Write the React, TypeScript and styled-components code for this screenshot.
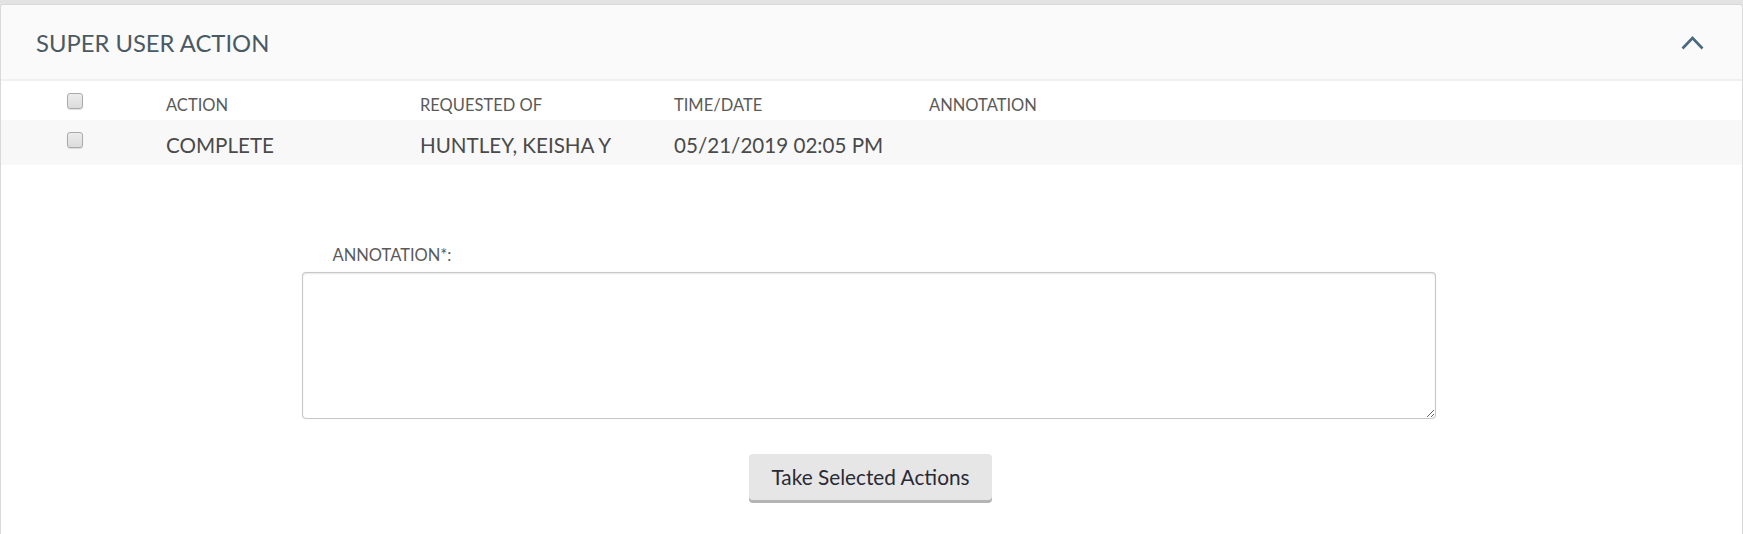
import * as React from 'react'
import styled, {createGlobalStyle} from 'styled-components'

const Global = createGlobalStyle({
	'html, body': {
		margin: 0,
		padding: 0,
		background: '#e3e3e3',
		fontFamily: 'Lato, "Open Sans", "Liberation Sans", sans-serif',
	},
	'#root': {
		minHeight: '534px',
	},
})

const Page = styled('div')({
	paddingTop: '4px',
	minHeight: '534px',
	boxSizing: 'border-box',
})

const Panel = styled('section')({
	background: 'white',
	border: '1px solid #d9d9d9',
	borderBottom: 'none',
	borderRadius: '4px 4px 0 0',
	minHeight: '530px',
	boxSizing: 'border-box',
	overflow: 'hidden',
})

const PanelHeader = styled('header')({
	display: 'flex',
	alignItems: 'center',
	justifyContent: 'space-between',
	height: '76px',
	padding: '1px 38px 0 35px',
	background: '#fafafa',
	borderBottom: '2px solid #f0f0f0',
	boxSizing: 'border-box',
})

const Title = styled('h2')({
	margin: 0,
	fontSize: '23.8px',
	fontWeight: 400,
	color: '#4b5963',
})

const ToggleButton = styled('button')({
	border: 'none',
	background: 'transparent',
	padding: 0,
	display: 'flex',
	cursor: 'pointer',
})

const Row = styled('div')<{$shaded?: boolean, $head?: boolean}>(({$shaded, $head}) => ({
	display: 'grid',
	gridTemplateColumns: '165px 254px 254px 255px 1fr',
	alignItems: 'center',
	height: $head ? '39px' : '45px',
	background: $shaded ? '#f8f8f8' : 'white',
	color: $head ? '#5a5a5a' : '#4a4a4a',
	fontSize: $head ? '16.5px' : '20.6px',
	paddingTop: $head ? '8px' : '4px',
	boxSizing: 'border-box',
}))

const CheckCell = styled('div')<{$offset: number}>(({$offset}) => ({
	paddingLeft: '66px',
	display: 'flex',
	alignSelf: 'start',
	paddingTop: `${$offset}px`,
}))

const Cell = styled('div')({
	whiteSpace: 'nowrap',
})

const Check = styled('input')({
	appearance: 'none',
	width: '16px',
	height: '16px',
	margin: 0,
	borderRadius: '3px',
	border: '1px solid #aaaaaa',
	background: 'linear-gradient(#ececec, #dcdcdc)',
	boxShadow: '0 1px 1px rgba(0,0,0,0.12)',
})

const Form = styled('div')({
	width: '1134px',
	marginLeft: 'calc(50% - 570px)',
	marginTop: '80px',
	display: 'flex',
	flexDirection: 'column',
})

const Label = styled('label')({
	fontSize: '16.5px',
	color: '#5a5a5a',
	paddingLeft: '31px',
	marginBottom: '7px',
	lineHeight: '20px',
})

const TextArea = styled('textarea')({
	height: '147px',
	border: '1px solid #c8c8c8',
	borderRadius: '4px',
	boxShadow: 'inset 0 1px 2px rgba(0,0,0,0.1), 0 0 1px rgba(0,0,0,0.15)',
	boxSizing: 'border-box',
	fontFamily: 'inherit',
	fontSize: '16px',
	padding: '8px 12px',
	outline: 'none',
})

const Actions = styled('div')({
	display: 'flex',
	justifyContent: 'center',
	marginTop: '35px',
	paddingLeft: '4px',
})

const PrimaryButton = styled('button')({
	width: '243px',
	height: '46px',
	border: 'none',
	borderRadius: '4px',
	background: '#e6e6e6',
	boxShadow: '0 3px 0 #b4b4b4',
	fontFamily: 'inherit',
	fontSize: '20.8px',
	color: '#2a2a35',
	cursor: 'pointer',
	padding: '0 0 2px',
})

const ChevronUp = () => (
	<svg width="23" height="15" viewBox="0 0 23 15">
		<path d="M1.5 13.5 L11.5 3 L21.5 13.5" fill="none" stroke="#4b6a80" strokeWidth="2.6" />
	</svg>
)

const rows = [
	{action: 'COMPLETE', requestedOf: 'HUNTLEY, KEISHA Y', time: '05/21/2019 02:05 PM', annotation: ''},
]

export default function App() {
	return (
		<>
			<Global />
			<Page>
				<Panel>
					<PanelHeader>
						<Title>SUPER USER ACTION</Title>
						<ToggleButton aria-label="Collapse">
							<ChevronUp />
						</ToggleButton>
					</PanelHeader>
					<Row $head>
						<CheckCell $offset={4}><Check type="checkbox" /></CheckCell>
						<Cell>ACTION</Cell>
						<Cell>REQUESTED OF</Cell>
						<Cell>TIME/DATE</Cell>
						<Cell>ANNOTATION</Cell>
					</Row>
					{rows.map((r, i) => (
						<Row key={i} $shaded>
							<CheckCell $offset={8}><Check type="checkbox" /></CheckCell>
							<Cell>{r.action}</Cell>
							<Cell>{r.requestedOf}</Cell>
							<Cell>{r.time}</Cell>
							<Cell>{r.annotation}</Cell>
						</Row>
					))}
					<Form>
						<Label htmlFor="annotation">ANNOTATION*:</Label>
						<TextArea id="annotation" />
						<Actions>
							<PrimaryButton>Take Selected Actions</PrimaryButton>
						</Actions>
					</Form>
				</Panel>
			</Page>
		</>
	)
}
